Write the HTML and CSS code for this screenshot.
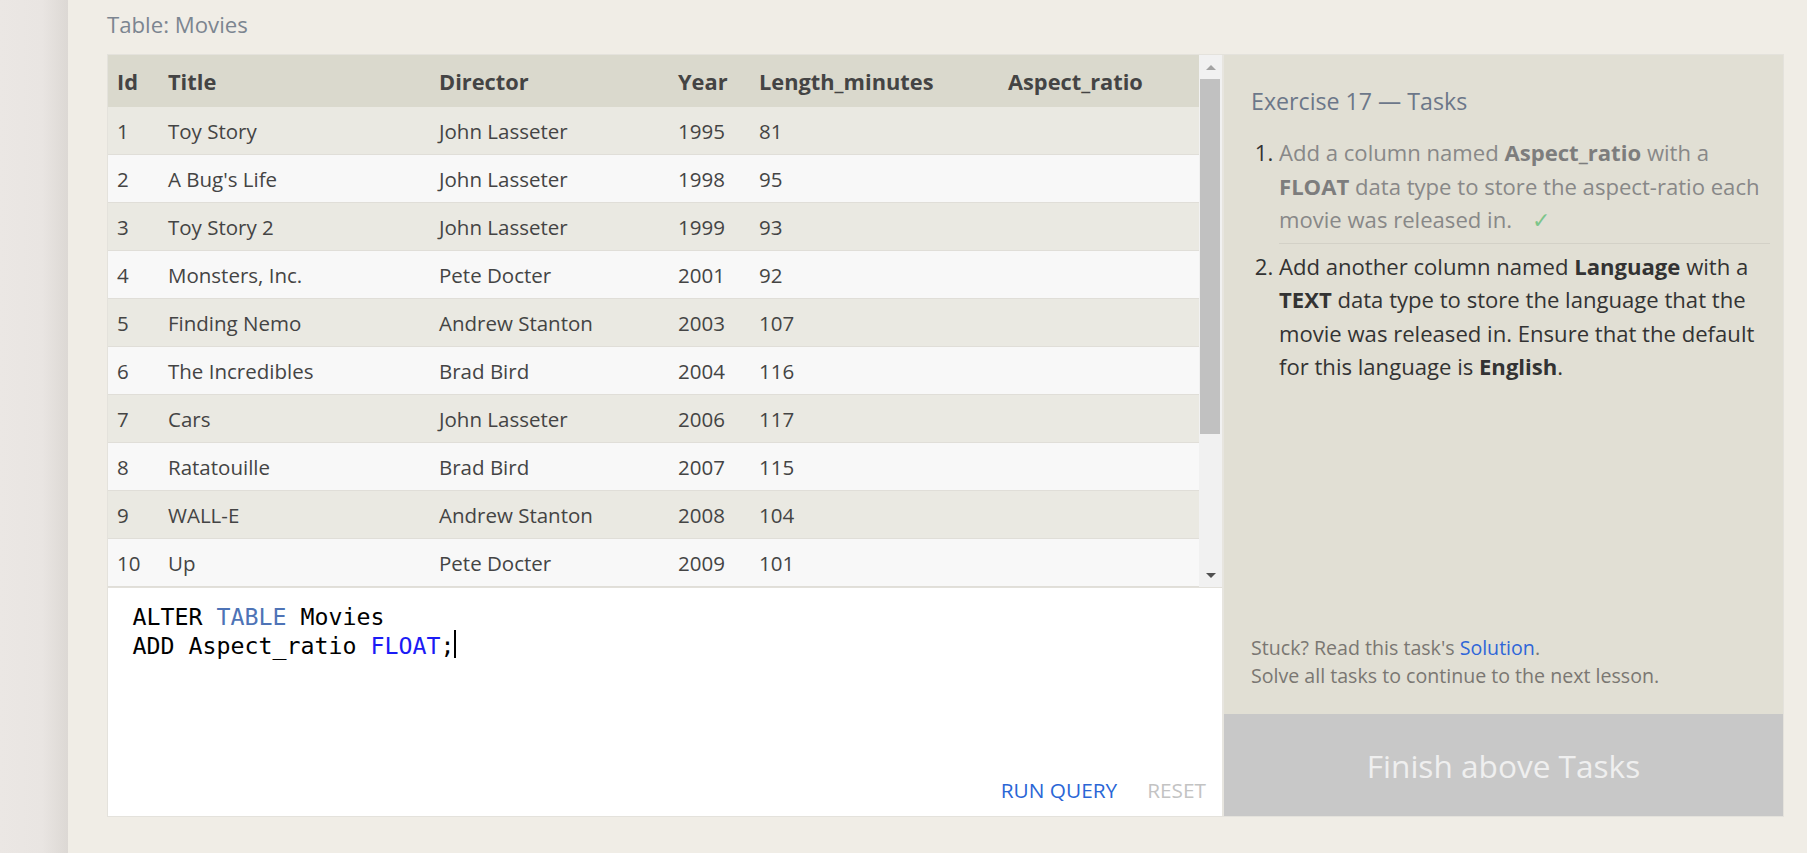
FILE: index.html
```html
<!DOCTYPE html>
<html lang="en">
<head>
<meta charset="utf-8">
<title>SQL Lesson 17 — Altering tables</title>
<link rel="stylesheet" href="styles.css">
</head>
<body>
<div class="sidebar"></div>
<main class="main">
  <div class="caption">Table: Movies</div>
  <div class="card">
    <div class="left">
      <div class="grid">
        <div class="grid-scroll">
          <table class="movies">
            <colgroup>
              <col class="c-id"><col class="c-title"><col class="c-dir"><col class="c-year"><col class="c-len"><col class="c-asp">
            </colgroup>
            <thead>
              <tr><th>Id</th><th>Title</th><th>Director</th><th>Year</th><th>Length_minutes</th><th>Aspect_ratio</th></tr>
            </thead>
            <tbody>
              <tr><td>1</td><td>Toy Story</td><td>John Lasseter</td><td>1995</td><td>81</td><td></td></tr>
              <tr><td>2</td><td>A Bug's Life</td><td>John Lasseter</td><td>1998</td><td>95</td><td></td></tr>
              <tr><td>3</td><td>Toy Story 2</td><td>John Lasseter</td><td>1999</td><td>93</td><td></td></tr>
              <tr><td>4</td><td>Monsters, Inc.</td><td>Pete Docter</td><td>2001</td><td>92</td><td></td></tr>
              <tr><td>5</td><td>Finding Nemo</td><td>Andrew Stanton</td><td>2003</td><td>107</td><td></td></tr>
              <tr><td>6</td><td>The Incredibles</td><td>Brad Bird</td><td>2004</td><td>116</td><td></td></tr>
              <tr><td>7</td><td>Cars</td><td>John Lasseter</td><td>2006</td><td>117</td><td></td></tr>
              <tr><td>8</td><td>Ratatouille</td><td>Brad Bird</td><td>2007</td><td>115</td><td></td></tr>
              <tr><td>9</td><td>WALL-E</td><td>Andrew Stanton</td><td>2008</td><td>104</td><td></td></tr>
              <tr><td>10</td><td>Up</td><td>Pete Docter</td><td>2009</td><td>101</td><td></td></tr>
            </tbody>
          </table>
        </div>
        <div class="scrollbar">
          <div class="sb-btn"><span class="arrow-up"></span></div>
          <div class="sb-track"><div class="sb-thumb"></div></div>
          <div class="sb-btn"><span class="arrow-down"></span></div>
        </div>
      </div>
      <div class="editor">
        <div class="code">
          <div class="code-line">ALTER <span class="kw">TABLE</span> Movies</div>
          <div class="code-line">ADD Aspect_ratio <span class="type">FLOAT</span>;<span class="caret"></span></div>
        </div>
        <div class="actions">
          <span class="run">RUN QUERY</span>
          <span class="reset">RESET</span>
        </div>
      </div>
    </div>
    <aside class="panel">
      <div class="panel-body">
        <h2 class="panel-title">Exercise 17 — Tasks</h2>
        <ol class="tasks">
          <li class="task done">Add a column named <b>Aspect_ratio</b> with a <b>FLOAT</b> data type to store the aspect-ratio each movie was released in. <span class="check">✓</span></li>
          <li class="task">Add another column named <b>Language</b> with a <b>TEXT</b> data type to store the language that the movie was released in. Ensure that the default for this language is <b>English</b>.</li>
        </ol>
        <div class="stuck">
          <div>Stuck? Read this task's <span class="link">Solution</span>.</div>
          <div>Solve all tasks to continue to the next lesson.</div>
        </div>
      </div>
      <div class="finish">Finish above Tasks</div>
    </aside>
  </div>
</main>
</body>
</html>
```
FILE: styles.css
```css
* { box-sizing: border-box; }

html, body {
  margin: 0;
  padding: 0;
}

body {
  display: flex;
  min-height: 853px;
  background: #f0ede6;
  font-family: "Open Sans", "Noto Sans", sans-serif;
  color: #444;
}

.sidebar {
  width: 68px;
  flex: none;
  background: linear-gradient(to right, #ebe7e4 0%, #e9e5e2 62%, #dcd8d4 100%);
}

.main {
  padding-left: 39px;
  padding-top: 10px;
}

.caption {
  font-size: 22.2px;
  color: #7c8590;
  line-height: 29px;
  margin-bottom: 15px;
}

.card {
  display: flex;
  width: 1677px;
  border: 1px solid #e4e2dc;
}

.left {
  width: 1116px;
  display: flex;
  flex-direction: column;
  border-right: 2px solid #e7e5df;
}

.grid {
  display: flex;
  height: 532px;
}

.grid-scroll {
  width: 1091px;
  overflow: hidden;
}

.movies {
  width: 1091px;
  table-layout: fixed;
  border-collapse: separate;
  border-spacing: 0;
  font-size: 20.5px;
}

.c-id { width: 51px; }
.c-title { width: 271px; }
.c-dir { width: 239px; }
.c-year { width: 81px; }
.c-len { width: 249px; }
.c-asp { width: 200px; }

.movies th {
  height: 52px;
  padding: 0 0 0 9px;
  text-align: left;
  background: #dad9cd;
  font-weight: 700;
  font-size: 21.8px;
  color: #444;
  white-space: nowrap;
}

.movies td {
  height: 48px;
  padding: 0 0 0 9px;
  border-bottom: 1px solid #e0ded8;
  white-space: nowrap;
  color: #444;
}

.movies tbody tr:nth-child(odd) td { background: #eae9e2; }
.movies tbody tr:nth-child(even) td { background: #f8f8f8; }

.scrollbar {
  width: 23px;
  display: flex;
  flex-direction: column;
  background: #f1f1f1;
}

.sb-btn {
  height: 24px;
  display: flex;
  align-items: center;
  justify-content: center;
}

.arrow-up {
  width: 0;
  height: 0;
  border-left: 5px solid transparent;
  border-right: 5px solid transparent;
  border-bottom: 5px solid #a3a3a3;
}

.arrow-down {
  width: 0;
  height: 0;
  border-left: 5px solid transparent;
  border-right: 5px solid transparent;
  border-top: 5px solid #505050;
}

.sb-track {
  flex: 1;
  padding: 0 2px 0 1px;
}

.sb-thumb {
  height: 355px;
  background: #c1c1c1;
}

.editor {
  height: 229px;
  background: #fff;
  border-top: 1px solid #e2e0da;
  display: flex;
  flex-direction: column;
}

.code {
  padding: 14px 0 0 24.5px;
  font-family: "DejaVu Sans Mono", "Liberation Mono", monospace;
  font-size: 23.25px;
  line-height: 29px;
  color: #000;
}

.code-line {
  height: 29px;
  white-space: pre;
}

.kw { color: #4e73b6; }
.type { color: #1b1bf5; }

.caret {
  display: inline-block;
  width: 2px;
  height: 28px;
  margin-top: -4px;
  vertical-align: -4px;
  background: #000;
}

.actions {
  margin-top: auto;
  display: flex;
  justify-content: flex-end;
  gap: 30px;
  padding: 0 16px 12px 0;
  font-size: 20.8px;
  line-height: 28px;
}

.run { color: #2a66d6; }
.reset { color: #c3c3c3; }

.panel {
  width: 559px;
  background: #e1dfd4;
  display: flex;
  flex-direction: column;
}

.panel-body {
  flex: 1;
  display: flex;
  flex-direction: column;
  padding: 31px 13px 24px 27px;
}

.panel-title {
  margin: 0;
  font-size: 23.2px;
  font-weight: 400;
  line-height: 30px;
  color: #6c7789;
}

.tasks {
  margin: 20px 0 0 0;
  padding-left: 28px;
  font-size: 22.1px;
  line-height: 33.5px;
  color: #333;
}

.task::marker { color: #333; }

.task.done {
  color: #888;
  padding-bottom: 6px;
  border-bottom: 1px solid #d3d1c7;
}

.task + .task { padding-top: 6px; }

.task b { font-weight: 700; }
.task.done b { color: #7d7d7d; }

.check {
  color: #7cc58a;
  margin-left: 14px;
}

.stuck {
  margin-top: auto;
  font-size: 19.6px;
  line-height: 28px;
  color: #7a7772;
}

.link { color: #2f66d8; }

.finish {
  height: 102px;
  background: #c8c8c8;
  color: #efefef;
  font-size: 31.6px;
  display: flex;
  align-items: center;
  justify-content: center;
}
```
